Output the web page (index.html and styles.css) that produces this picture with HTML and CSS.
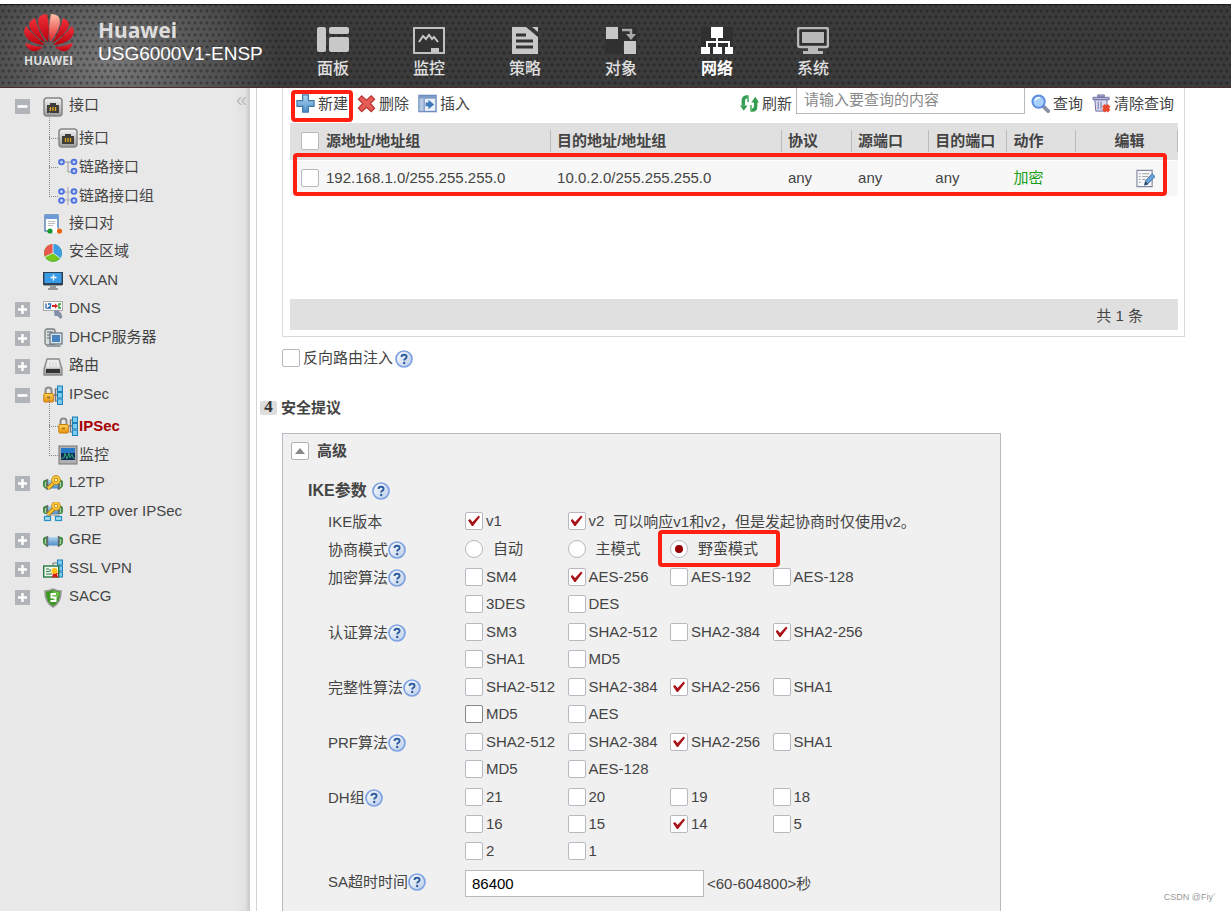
FILE: index.html
```html
<!DOCTYPE html>
<html lang="zh-CN">
<head>
<meta charset="utf-8">
<title>Huawei USG6000V1-ENSP</title>
<link rel="stylesheet" href="styles.css">
</head>
<body>
<svg class="defs" aria-hidden="true">
  <defs>
    <linearGradient id="g-red" x1="0" y1="0" x2="0" y2="1"><stop offset="0" stop-color="#f0303a"/><stop offset="1" stop-color="#b8000c"/></linearGradient>
    <linearGradient id="g-pink" x1="0" y1="0" x2="0" y2="1"><stop offset="0" stop-color="#ffc0a8"/><stop offset="1" stop-color="#e02028"/></linearGradient>
    <linearGradient id="g-metal" x1="0" y1="0" x2="0" y2="1"><stop offset="0" stop-color="#f4f4f4"/><stop offset="1" stop-color="#9a9a9a"/></linearGradient>
    <linearGradient id="g-gold" x1="0" y1="0" x2="0" y2="1"><stop offset="0" stop-color="#ffd45a"/><stop offset="1" stop-color="#e8920c"/></linearGradient>
    <linearGradient id="g-blue" x1="0" y1="0" x2="0" y2="1"><stop offset="0" stop-color="#b4d8f0"/><stop offset="1" stop-color="#4a8cc8"/></linearGradient>
    <linearGradient id="g-help" x1="0" y1="0" x2="1" y2="1"><stop offset="0" stop-color="#ffffff"/><stop offset="1" stop-color="#b8cbe8"/></linearGradient>
  </defs>
  <symbol id="i-port" viewBox="0 0 20 20"><rect x="1" y="1" width="18" height="18" rx="3" fill="url(#g-metal)" stroke="#858585" stroke-width="1.5"/><path d="M4 16V8h3V6h6v2h3v8z" fill="#403c38"/><path d="M7.500 10v4M10 10v4M12.500 10v4" stroke="#e0a820" stroke-width="1.300"/></symbol>
  <symbol id="i-link" viewBox="0 0 20 20"><path d="M4 5h12M10 5v10h6" fill="none" stroke="#999"/><g fill="#c4d2fa" stroke="#4c70dc" stroke-width="1.800"><circle cx="3.500" cy="5" r="2.400"/><circle cx="16" cy="5" r="2.400"/><circle cx="16" cy="14" r="2.400"/></g></symbol>
  <symbol id="i-linkgroup" viewBox="0 0 20 20"><path d="M4 6h12M4 14h12M10 1v18" fill="none" stroke="#aaa"/><g fill="#c4d2fa" stroke="#4c70dc" stroke-width="1.800"><circle cx="3.500" cy="5.500" r="2.400"/><circle cx="16" cy="5.500" r="2.400"/><circle cx="3.500" cy="14.500" r="2.400"/><circle cx="16" cy="14.500" r="2.400"/></g></symbol>
  <symbol id="i-pair" viewBox="0 0 20 20"><rect x="2" y="1" width="13" height="16" fill="#fff" stroke="#4878b0" stroke-width="1.300"/><path d="M2 1h13v4H2z" fill="#6c9cd8"/><path d="M5 7.500h7M5 9.500h7M5 11.500h5" stroke="#bbb"/><path d="M6 16.500h10" stroke="#fff" stroke-width="4"/><circle cx="7" cy="17" r="2.600" fill="#149a30"/><circle cx="16.500" cy="17" r="2.600" fill="#e8640c"/></symbol>
  <symbol id="i-zone" viewBox="0 0 20 20"><circle cx="10" cy="10" r="9" fill="#55b828"/><path d="M10 10V1a9 9 0 0 1 7 14.500z" fill="#3c9ce4"/><path d="M10 10V1A9 9 0 0 0 2 14z" fill="#e8584c"/><path d="M2 13l8-3 6 5a9 9 0 0 1-14-2z" fill="#78c81c"/><path d="M10 1v9l7 5M10 10l-8 4" stroke="#f0f4f8" fill="none" stroke-width=".8"/></symbol>
  <symbol id="i-vxlan" viewBox="0 0 20 20"><rect x="0" y="1" width="20" height="13" fill="#2c4058"/><rect x="1.500" y="2" width="17" height="10" fill="#389ce8"/><path d="M10.500 3.500v6M7.500 6.500h6" stroke="#fff" stroke-width="1.400"/><path d="M1 14h18v1H1zM7 15h6v2H7zM5 17h10v2H5z" fill="#999"/></symbol>
  <symbol id="i-dns" viewBox="0 0 20 20"><rect x=".5" y="1.500" width="19" height="9" fill="#f8f8f8" stroke="#aaa"/><path d="M3 3.500v5M5 4h2.500v2L5 8h3" fill="none" stroke="#2864b8" stroke-width="1.300"/><path d="M9 6h4" stroke="#d82020" stroke-width="2"/><path d="M12 3.500l3 2.500-3 2.500z" fill="#d82020"/><path d="M18 4h-2v4h2" fill="none" stroke="#28a028" stroke-width="1.400"/><path d="M11 11l4-1 3 3 1.500 4-2 2-3-3-3 0z" fill="#8490a8"/></symbol>
  <symbol id="i-dhcp" viewBox="0 0 20 20"><rect x="2" y="1" width="10" height="16" rx="2" fill="#d8dcdc" stroke="#7a8080" stroke-width="1.300"/><path d="M4 4h6M4 7h3M4 10h3" stroke="#667"/><rect x="7" y="5" width="12" height="11" fill="#dce4ec" stroke="#6c7884" stroke-width="1.300"/><rect x="9" y="7" width="8" height="7" fill="#4884c0"/><path d="M3 17h14l1 2H4z" fill="#9aa0a0"/></symbol>
  <symbol id="i-route" viewBox="0 0 20 20"><path d="M4 2h12l3 10v6H1v-6z" fill="url(#g-metal)" stroke="#888" stroke-width="1.300"/><path d="M5 3.500h10l1.500 7h-13z" fill="#eee"/><path d="M7 5v5M10 5v5M13 5v5" stroke="#ccc"/><path d="M3 12h14v4H3z" fill="#333"/></symbol>
  <symbol id="i-ipsec" viewBox="0 0 20 20"><path d="M2.500 9V5.500a3 3 0 0 1 6 0V9" fill="none" stroke="#8a8a90" stroke-width="2"/><path d="M11 10h5M12.500 3.500v13" stroke="#777" stroke-width="1.500"/><rect x=".8" y="8.500" width="9.500" height="8.500" rx="1" fill="url(#g-gold)" stroke="#c87c10"/><path d="M4 12.500h3" stroke="#a86808" stroke-width="1.500"/><path d="M12 4h3M12 16h3" stroke="#777"/><g fill="#7cccf0" stroke="#1c80b8"><rect x="14.500" y="1" width="5" height="5.500"/><rect x="14.500" y="7.500" width="5" height="5.500"/><rect x="14.500" y="14" width="5" height="5.500"/></g></symbol>
  <symbol id="i-monitor" viewBox="0 0 20 20"><rect x="1" y="1" width="18" height="18" fill="#b0b0b0" stroke="#777"/><rect x="3" y="3" width="14" height="12" fill="#102c58"/><path d="M3 3h14v5H3z" fill="#2878c8"/><path d="M3 13h3l1-5 2 6 2-6 1 5 2-4 1 4h2" fill="none" stroke="#30a070"/></symbol>
  <symbol id="i-gre" viewBox="0 0 20 20"><path d="M4 5.500Q-1 6-.5 10T4 15.500zM16 5.500q5 .5 4.500 4.500T16 15.500z" fill="#468c46"/><path d="M3 8q-1.500 2 0 5M17 8q1.500 2 0 5" fill="none" stroke="#c8dcc8"/><path d="M5 6h10v8.500H5z" fill="url(#g-blue)"/><path d="M4.500 5v11M15.500 5v11" stroke="#667" stroke-width="1.400"/></symbol>
  <symbol id="i-key" viewBox="0 0 20 20"><path d="M5 14.500l7-7" stroke="#b87808" stroke-width="4"/><path d="M5 14.500l7-7" stroke="#f8c838" stroke-width="2.400"/><circle cx="13" cy="6" r="3" fill="#fff4c0" stroke="#b87808" stroke-width="3.400"/><circle cx="13" cy="6" r="3" fill="none" stroke="#f8c838" stroke-width="2"/></symbol>
  <symbol id="i-l2tp" viewBox="0 0 20 20"><use href="#i-gre"/><use href="#i-key"/></symbol>
  <symbol id="i-l2tpip" viewBox="0 0 20 20"><use href="#i-gre" y="-2"/><path d="M2 12h16v8H2z" fill="#e8e8e8"/><path d="M4 15v-2h12v2" fill="none" stroke="#888"/><g fill="#9cdcf4" stroke="#2890c4" stroke-width="1.200"><rect x="1.500" y="14.500" width="6" height="4"/><rect x="12.500" y="14.500" width="6" height="4"/></g><use href="#i-key" y="-2"/></symbol>
  <symbol id="i-ssl" viewBox="0 0 20 20"><path d="M10 7V4h4" stroke="#777" fill="none"/><g fill="#7cccf0" stroke="#1c80b8"><rect x="14.500" y="1" width="5" height="5"/><rect x="14.500" y="7" width="5" height="5"/><rect x="14.500" y="13" width="5" height="5"/></g><rect x=".7" y="7" width="15" height="11" fill="#eef8ee" stroke="#287840" stroke-width="1.400"/><path d="M3 10h3M3 12.500h3M3 15h6M7 10v3" stroke="#287840"/><path d="M10 14l-1 5 3-1 3 1-1-4 3-1z" fill="#d81818"/><circle cx="11.500" cy="12" r="3" fill="#ffc010"/></symbol>
  <symbol id="i-sacg" viewBox="0 0 20 20"><path d="M10 1q4 2 8 2 0 12-8 16Q2 15 2 3q4 0 8-2z" fill="#3c9820" stroke="#999" stroke-width="1.600"/><path d="M10 2.500q3 1.500 6.500 1.700-.5 7-6.500 8z" fill="#6cc048"/><path d="M13 6H8.500v3.500h4V13H7.500" fill="none" stroke="#fff" stroke-width="2"/></symbol>
  <symbol id="i-add" viewBox="0 0 20 20"><path d="M7 1h6v6h6v6h-6v6H7v-6H1V7h6z" fill="url(#g-blue)" stroke="#4078ac" stroke-width="1.300"/></symbol>
  <symbol id="i-del" viewBox="0 0 20 20"><path d="M5 2l5 4.500L15 2l3.500 3.500L14 10l4.500 5L15 18.500 10 14l-5 4.500L1.500 15 6 10 1.500 5.500z" fill="#e85c58" stroke="#b83430" stroke-width="1.300"/></symbol>
  <symbol id="i-insert" viewBox="0 0 20 20"><rect x="1" y="1.500" width="18" height="17" fill="#eaf0f8" stroke="#6c8cbc" stroke-width="1.500"/><path d="M1 2h18v3H1z" fill="#7c9cc8"/><path d="M2 5h4v13H2z" fill="#b4c8e4"/><path d="M6.500 5v13" stroke="#6c8cbc" stroke-width="1.200"/><path d="M8 9h3V6l6 5-6 5v-3H8z" fill="#3c78b8"/></symbol>
  <symbol id="i-refresh" viewBox="0 0 20 20"><g fill="none" stroke="#349c50" stroke-width="3.600"><path d="M9 3H7Q3.500 3 3.500 7v5"/><path d="M11 17h2q3.500 0 3.500-4V8"/></g><path d="M0 11h8l-4 5.500z" fill="#349c50" transform="translate(0 1)"/><path d="M12 9h8l-4-6z" fill="#349c50"/><path d="M8.500 2.500v6M11.500 17.500v-6" stroke="#64bc78" stroke-width="2"/></symbol>
  <symbol id="i-search" viewBox="0 0 20 20"><path d="M13 13l5 5" stroke="#8890a8" stroke-width="4" stroke-linecap="round"/><circle cx="8" cy="8" r="6.500" fill="#a8d0fc" stroke="#5c8ce0" stroke-width="2"/><path d="M4.500 7a4 4 0 0 1 5-3" stroke="#fff" stroke-width="1.500" fill="none"/></symbol>
  <symbol id="i-trash" viewBox="0 0 20 20"><path d="M3 6h13l-1 12H4z" fill="#dcdcf0" stroke="#6c6ca0"/><path d="M1 3.500h17v2.500H1zM6 1h7v2H6z" fill="#b8b8dc" stroke="#6c6ca0"/><path d="M6.500 8v8M9.500 8v8" stroke="#6c6ca0"/><path d="M12 12l6 6M18 12l-6 6" stroke="#e8482c" stroke-width="4"/></symbol>
  <symbol id="i-edit" viewBox="0 0 20 20"><path d="M1 1.500h16v17H1z" fill="#f8f8fa" stroke="#8088a0" stroke-width="1.200"/><path d="M3 5h2M6.500 5H14M3 8h2M6.500 8H13M3 11h2M6.500 11H10M3 14h2" stroke="#999ca8"/><path d="M9 17l1-4.500L17 5l3 3-7.500 7.500z" fill="#68a4dc" stroke="#3c6ca4"/><path d="M9 17l1-4 3 3z" fill="#345"/></symbol>
  <symbol id="i-help" viewBox="0 0 18 18"><circle cx="9" cy="9" r="8" fill="url(#g-help)" stroke="#7ea2e2" stroke-width="1.700"/><path d="M6.500 7Q6.500 4.800 9 4.800q2.600 0 2.600 2 0 1.300-1.400 2Q9.200 9.400 9.200 10.600" fill="none" stroke="#2c5c9c" stroke-width="1.900"/><circle cx="9.200" cy="13" r="1.200" fill="#2c5c9c"/></symbol>
  <symbol id="i-plus" viewBox="0 0 15 15"><path d="M7.500 3v9M3 7.500h9" stroke="#fff" stroke-width="2.400"/></symbol>
  <symbol id="i-minus" viewBox="0 0 15 15"><path d="M2.500 7.500h10" stroke="#fff" stroke-width="2.600"/></symbol>
</svg>

<header class="topbar">
  <div class="brand">
    <div class="logo">
      <svg viewBox="0 0 50 40" aria-hidden="true"><g fill="url(#g-red)">
        <path d="M24 29C18 22 12 12 15 4Q18 1 23 1 26 14 24 29z"/>
        <path d="M22 30C13 25 5 17 5 11Q6 7 11 5 14 18 22 30z"/>
        <path d="M21 32C12 32 1 27 0 19Q0 16 2 13 9 22 21 32z"/>
        <path d="M19 34Q14 39 8 38 3 36 1 30 9 33 19 34z"/>
        <path d="M28 30C37 25 45 17 45 11Q44 7 39 5 36 18 28 30z"/>
        <path d="M29 32C38 32 49 27 50 19Q50 16 48 13 41 22 29 32z"/>
        <path d="M31 34Q36 39 42 38 47 36 49 30 41 33 31 34z"/></g>
        <path d="M26 29C32 22 38 12 35 4Q32 1 27 1 24 14 26 29z" fill="url(#g-pink)"/>
      </svg>
      <span>HUAWEI</span>
    </div>
    <div class="product"><strong>Huawei</strong><span>USG6000V1-ENSP</span></div>
  </div>
  <nav class="mainnav">
    <a href="#"><svg viewBox="0 0 32 28"><g fill="#c8c8c8"><rect x="0" y="0" width="9" height="25" rx="2"/><rect x="12" y="0" width="20" height="7" rx="2"/><rect x="12" y="10" width="20" height="15" rx="2"/></g></svg>面板</a>
    <a href="#"><svg viewBox="0 0 32 28"><rect x="1" y="1" width="30" height="25" fill="#333" stroke="#c0c0c0" stroke-width="2"/><path d="M6 15l4-6 3 3 3-4 3 4 2-2 4 5" fill="none" stroke="#c8c8c8" stroke-width="2"/><path d="M18 21h8v4h-8z" fill="#c8c8c8"/></svg>监控</a>
    <a href="#"><svg viewBox="0 0 32 28"><path d="M3 0h14l12 10v17H3z" fill="#c8c8c8"/><path d="M23 0h6v5z" fill="#c8c8c8"/><path d="M7 8h10M7 14h17M7 20h17" stroke="#333" stroke-width="3"/></svg>策略</a>
    <a href="#"><svg viewBox="0 0 32 28"><path d="M0 13h18v14H0zM14 0h18v14H14z" fill="#303030"/><path d="M1 0h12v12H1zM19 14h12v13H19z" fill="#c8c8c8"/><path d="M17 3h9v5" fill="none" stroke="#a8a8a8" stroke-width="2.500"/><path d="M21 7h10l-5 6z" fill="#a8a8a8"/></svg>对象</a>
    <a href="#" class="active"><svg viewBox="0 0 32 28"><path d="M0 0h32v27H0z" fill="#303030"/><path d="M10 0h12v11H10zM0 20h9v7H0zM12 20h9v7h-9zM24 20h8v7h-8z" fill="#fff"/><path d="M16 10v11M6 21v-6h22v6" fill="none" stroke="#fff" stroke-width="2"/></svg>网络</a>
    <a href="#"><svg viewBox="0 0 32 28"><rect x="1" y="1" width="30" height="19" rx="2" fill="#303030" stroke="#b8b8b8" stroke-width="2.500"/><path d="M5 5h22v11H5zM11 20h10v4H11zM6 24h20v3H6z" fill="#b8b8b8"/></svg>系统</a>
  </nav>
</header>

<div class="shell">
  <aside class="sidebar">
    <button class="collapse" aria-label="收起">«</button>
    <ul class="tree">
      <li><div class="row"><button class="tog" aria-label="收起接口"><svg><use href="#i-minus"/></svg></button><a href="#"><svg><use href="#i-port"/></svg><span>接口</span></a></div>
        <ul>
          <li><a href="#"><svg><use href="#i-port"/></svg>接口</a></li>
          <li><a href="#"><svg><use href="#i-link"/></svg>链路接口</a></li>
          <li><a href="#"><svg><use href="#i-linkgroup"/></svg>链路接口组</a></li>
        </ul></li>
      <li><div class="row"><a href="#"><svg><use href="#i-pair"/></svg><span>接口对</span></a></div></li>
      <li><div class="row"><a href="#"><svg><use href="#i-zone"/></svg><span>安全区域</span></a></div></li>
      <li><div class="row"><a href="#"><svg><use href="#i-vxlan"/></svg><span>VXLAN</span></a></div></li>
      <li><div class="row"><button class="tog" aria-label="展开DNS"><svg><use href="#i-plus"/></svg></button><a href="#"><svg><use href="#i-dns"/></svg><span>DNS</span></a></div></li>
      <li><div class="row"><button class="tog" aria-label="展开DHCP服务器"><svg><use href="#i-plus"/></svg></button><a href="#"><svg><use href="#i-dhcp"/></svg><span>DHCP服务器</span></a></div></li>
      <li><div class="row"><button class="tog" aria-label="展开路由"><svg><use href="#i-plus"/></svg></button><a href="#"><svg><use href="#i-route"/></svg><span>路由</span></a></div></li>
      <li><div class="row"><button class="tog" aria-label="收起IPSec"><svg><use href="#i-minus"/></svg></button><a href="#"><svg><use href="#i-ipsec"/></svg><span>IPSec</span></a></div>
        <ul>
          <li><a href="#" class="current"><svg><use href="#i-ipsec"/></svg>IPSec</a></li>
          <li><a href="#"><svg><use href="#i-monitor"/></svg>监控</a></li>
        </ul></li>
      <li><div class="row"><button class="tog" aria-label="展开L2TP"><svg><use href="#i-plus"/></svg></button><a href="#"><svg><use href="#i-l2tp"/></svg><span>L2TP</span></a></div></li>
      <li><div class="row"><a href="#"><svg><use href="#i-l2tpip"/></svg><span>L2TP over IPSec</span></a></div></li>
      <li><div class="row"><button class="tog" aria-label="展开GRE"><svg><use href="#i-plus"/></svg></button><a href="#"><svg><use href="#i-gre"/></svg><span>GRE</span></a></div></li>
      <li><div class="row"><button class="tog" aria-label="展开SSL VPN"><svg><use href="#i-plus"/></svg></button><a href="#"><svg><use href="#i-ssl"/></svg><span>SSL VPN</span></a></div></li>
      <li><div class="row"><button class="tog" aria-label="展开SACG"><svg><use href="#i-plus"/></svg></button><a href="#"><svg><use href="#i-sacg"/></svg><span>SACG</span></a></div></li>
    </ul>
  </aside>

  <main class="content">
    <section class="flows">
      <div class="toolbar">
        <button class="tool marked"><svg><use href="#i-add"/></svg>新建</button>
        <button class="tool"><svg><use href="#i-del"/></svg>删除</button>
        <button class="tool"><svg><use href="#i-insert"/></svg>插入</button>
        <button class="tool push"><svg><use href="#i-refresh"/></svg>刷新</button>
        <input class="query" type="text" placeholder="请输入要查询的内容" aria-label="查询内容">
        <button class="tool"><svg><use href="#i-search"/></svg>查询</button>
        <button class="tool"><svg><use href="#i-trash"/></svg>清除查询</button>
      </div>
      <div class="tablewrap">
        <table>
          <colgroup><col class="c-src"><col class="c-dst"><col class="c-proto"><col class="c-sport"><col class="c-dport"><col class="c-act"><col class="c-edit"></colgroup>
          <thead><tr>
            <th><label><input type="checkbox"><span>源地址/地址组</span></label></th><th><div>目的地址/地址组</div></th><th><div>协议</div></th><th><div>源端口</div></th><th><div>目的端口</div></th><th><div>动作</div></th><th class="center"><div>编辑</div></th>
          </tr></thead>
          <tbody><tr>
            <td><label><input type="checkbox"><span>192.168.1.0/255.255.255.0</span></label></td><td>10.0.2.0/255.255.255.0</td><td>any</td><td>any</td><td>any</td><td class="ok">加密</td><td class="edit"><button aria-label="编辑"><svg><use href="#i-edit"/></svg></button></td>
          </tr></tbody>
        </table>
        <div class="rowmark"></div>
      </div>
      <div class="pager">共 1 条</div>
    </section>

    <div class="inject"><label><input type="checkbox">反向路由注入</label><svg class="help"><use href="#i-help"/></svg></div>

    <h2 class="step"><span class="num">4</span>安全提议</h2>

    <section class="advanced">
      <div class="advhead"><button class="fold" aria-label="收起高级"></button><h3>高级</h3></div>
      <h4>IKE参数<svg class="help"><use href="#i-help"/></svg></h4>

      <div class="group"><div class="name">IKE版本</div><div class="opts">
        <label><input type="checkbox" checked>v1</label>
        <div class="with-hint"><label><input type="checkbox" checked>v2</label><span class="hint">可以响应v1和v2，但是发起协商时仅使用v2。</span></div>
      </div></div>
      <div class="group"><div class="name">协商模式<svg class="help"><use href="#i-help"/></svg></div><div class="opts modes">
        <label><input type="radio" name="mode">自动</label><label><input type="radio" name="mode">主模式</label><label class="marked"><input type="radio" name="mode" checked>野蛮模式</label>
      </div></div>
      <div class="group"><div class="name">加密算法<svg class="help"><use href="#i-help"/></svg></div><div class="opts">
        <label><input type="checkbox">SM4</label><label><input type="checkbox" checked>AES-256</label><label><input type="checkbox">AES-192</label><label><input type="checkbox">AES-128</label>
        <label><input type="checkbox">3DES</label><label><input type="checkbox">DES</label>
      </div></div>
      <div class="group"><div class="name">认证算法<svg class="help"><use href="#i-help"/></svg></div><div class="opts">
        <label><input type="checkbox">SM3</label><label><input type="checkbox">SHA2-512</label><label><input type="checkbox">SHA2-384</label><label><input type="checkbox" checked>SHA2-256</label>
        <label><input type="checkbox">SHA1</label><label><input type="checkbox">MD5</label>
      </div></div>
      <div class="group"><div class="name">完整性算法<svg class="help"><use href="#i-help"/></svg></div><div class="opts">
        <label><input type="checkbox">SHA2-512</label><label><input type="checkbox">SHA2-384</label><label><input type="checkbox" checked>SHA2-256</label><label><input type="checkbox">SHA1</label>
        <label><input type="checkbox" class="hot">MD5</label><label><input type="checkbox">AES</label>
      </div></div>
      <div class="group"><div class="name">PRF算法<svg class="help"><use href="#i-help"/></svg></div><div class="opts">
        <label><input type="checkbox">SHA2-512</label><label><input type="checkbox">SHA2-384</label><label><input type="checkbox" checked>SHA2-256</label><label><input type="checkbox">SHA1</label>
        <label><input type="checkbox">MD5</label><label><input type="checkbox">AES-128</label>
      </div></div>
      <div class="group"><div class="name">DH组<svg class="help"><use href="#i-help"/></svg></div><div class="opts">
        <label><input type="checkbox">21</label><label><input type="checkbox">20</label><label><input type="checkbox">19</label><label><input type="checkbox">18</label>
        <label><input type="checkbox">16</label><label><input type="checkbox">15</label><label><input type="checkbox" checked>14</label><label><input type="checkbox">5</label>
        <label><input type="checkbox">2</label><label><input type="checkbox">1</label>
      </div></div>
      <div class="group timeout"><label class="name" for="sa">SA超时时间<svg class="help"><use href="#i-help"/></svg></label><input id="sa" type="text" value="86400"><span class="range">&lt;60-604800&gt;秒</span></div>
    </section>
  </main>
</div>
<div class="credit">CSDN @Fiy`</div>
</body>
</html>
```
FILE: styles.css
```css
* { box-sizing: border-box; }
body {
  margin: 0;
  height: 100vh;
  overflow: hidden;
  display: flex;
  flex-direction: column;
  background: #fff;
  color: #444;
  font: 15px/20px "Liberation Sans", "Noto Sans CJK SC", sans-serif;
}
button, input { font: inherit; color: inherit; margin: 0; }
button { padding: 0; border: 0; background: none; }
a { color: inherit; text-decoration: none; }
ul { list-style: none; margin: 0; padding: 0; }
h2, h3, h4 { margin: 0; font-size: 15px; }
svg { display: block; flex: none; }
.defs { position: absolute; width: 0; height: 0; }
.help { width: 18px; height: 18px; }

/* top bar */
.topbar {
  flex: none;
  display: flex;
  height: 84px;
  margin-top: 4px;
  border-top: 1px solid #1c1c1c;
  border-bottom: 1px solid #4a2c2c;
  background:
    radial-gradient(circle, rgba(20, 20, 20, .4) 1px, transparent 2px) 0 0 / 6px 12px,
    radial-gradient(circle, rgba(20, 20, 20, .4) 1px, transparent 2px) 3px 6px / 6px 12px,
    radial-gradient(ellipse 170px 130px at 110px 56px, #787878, #3b3b3c);
}
.brand { flex: none; width: 285px; display: flex; padding-left: 22px; }
.logo { width: 53px; padding-top: 8px; text-align: center; }
.logo svg { width: 50px; height: 40px; margin: 0 auto; }
.logo span { display: block; margin-top: 1px; font: bold 12px/14px "Open Sans", sans-serif; color: #ddd; }
.product { margin-left: 23px; padding-top: 13px; }
.product strong { display: block; font: bold 21px/24px "Noto Sans", sans-serif; color: #ddd; }
.product span { display: block; margin-top: 1px; font-size: 19px; line-height: 22px; color: #fff; }
.mainnav { display: flex; }
.mainnav a {
  width: 96px;
  padding-top: 22px;
  display: flex;
  flex-direction: column;
  align-items: center;
  gap: 4px;
  font-size: 16px;
  font-weight: 500;
  line-height: 20px;
  color: #e0e0e0;
}
.mainnav svg { width: 32px; height: 28px; }
.mainnav .active { font-weight: bold; color: #fff; }

.shell { flex: 1; min-height: 0; display: flex; }

/* sidebar */
.sidebar {
  position: relative;
  flex: none;
  width: 250px;
  padding-top: 4px;
  background: linear-gradient(to right, #e8e8e8 234px, #e2e2e2 245px, #c8c8c8);
}
.collapse { position: absolute; top: 1px; right: 3px; font-size: 20px; line-height: 20px; color: #bbb; }
.row { display: flex; align-items: center; height: 28px; padding-left: 43px; }
.tree > li:nth-child(odd) > .row { height: 29px; }
.tog { width: 15px; height: 15px; margin: 0 13px 0 -28px; background: #b0b4b8; }
.tog svg { width: 15px; height: 15px; }
.tree a { display: flex; align-items: center; }
.tree a svg { width: 20px; height: 20px; }
.row span { margin-left: 6px; padding-bottom: 3px; }
.tree ul { padding: 2px 0 0 49px; }
.tree ul li { position: relative; padding-left: 9px; height: 29px; }
.tree ul li a { height: 29px; gap: 1px; }
.tree ul li::before {
  content: "";
  position: absolute;
  left: 0;
  top: -15px;
  width: 8px;
  height: 30px;
  border-left: 1px dotted #888;
  border-bottom: 1px dotted #888;
}
.tree .current { font-weight: bold; color: #a80000; }

/* main area */
.content {
  flex: 1;
  min-width: 0;
  display: flex;
  flex-direction: column;
  margin-left: 6px;
  border-left: 1px solid #d4d4d4;
  padding: 0 46px 0 25px;
}
.flows { flex: none; border: 1px solid #d8d8d8; border-top: 0; padding: 0 6px 6px 7px; }
.toolbar { display: flex; align-items: center; height: 35px; padding: 0 4px 4px 6px; gap: 9px; }
.tool { position: relative; display: flex; align-items: center; gap: 3px; white-space: nowrap; }
.tool svg { width: 19px; height: 19px; }
.push { margin-left: auto; }
.query {
  align-self: flex-start;
  width: 229px;
  height: 26px;
  margin: 0 -3px 0 -5px;
  padding: 0 7px 2px;
  border: 1px solid #b8b8be;
  border-top: 0;
  background: #fff;
}
.query::placeholder { color: #8a8a8a; }
.tool.marked::after, .rowmark, label.marked::after {
  content: "";
  position: absolute;
  border: 4px solid #ff2012;
  border-radius: 4px;
  pointer-events: none;
}
.tool.marked::after { inset: -4px -5px -8px -5px; }
.tablewrap { position: relative; }
.rowmark { inset: 30px 11px 0 3px; }
table { width: 100%; border-collapse: collapse; table-layout: fixed; }
.c-src { width: 29.400%; }
.c-dst { width: 26%; }
.c-proto { width: 7.900%; }
.c-sport { width: 8.700%; }
.c-dport { width: 8.800%; }
.c-act { width: 7.700%; }
.c-edit { width: 11.500%; }
th { height: 37px; padding: 0; background: #e0e0e0; text-align: left; white-space: nowrap; }
th label, th div { display: flex; align-items: center; height: 22px; border-right: 1px solid #bbb; }
th div { padding-left: 6px; }
th.center div { justify-content: center; }
td { height: 36px; padding: 0 0 0 6px; border-top: 1px solid #fff; background: #f7f7f7; white-space: nowrap; }
td label { display: flex; align-items: center; }
th label { padding-left: 11px; gap: 7px; }
td:first-child { padding-left: 11px; }
td label { gap: 7px; }
td.ok { color: #16a016; }
td.edit { padding-right: 23px; }
td.edit button { display: block; margin-left: auto; }
td.edit svg { width: 19px; height: 19px; }
.tablewrap input { background: #f9f9f9; border-color: #c4c4c8; }
.pager { margin-top: 103px; height: 31px; padding: 2px 35px 0 0; background: #e0e0e0; text-align: right; line-height: 30px; }

.inject { display: flex; align-items: center; margin-top: 11px; height: 22px; }
.inject label { display: flex; align-items: center; gap: 3px; }
.inject .help { margin-left: 2px; align-self: flex-end; }
.step { display: flex; align-items: center; gap: 4px; margin: 30px 0 0 -22px; height: 20px; }
.num {
  width: 17px;
  height: 14px;
  background: #ddd;
  border-radius: 2px;
  font: bold 17px/11px "Liberation Serif", serif;
  text-align: center;
  color: #333;
}

input[type=checkbox], input[type=radio] {
  appearance: none;
  flex: none;
  width: 18px;
  height: 18px;
  border: 1px solid #b8b8c0;
  border-radius: 2px;
  background: #fff;
}
input[type=radio] { border-radius: 50%; }
input[type=checkbox].hot { border-color: #888; }
input[type=checkbox]:checked::before {
  content: "";
  display: block;
  width: 12px;
  height: 12px;
  margin: 2px;
  background: #a81418;
  clip-path: polygon(0 48%, 16% 38%, 38% 62%, 88% 8%, 100% 20%, 42% 96%, 32% 96%);
}
input[type=radio]:checked::before {
  content: "";
  display: block;
  width: 8px;
  height: 8px;
  margin: 4px;
  border-radius: 50%;
  background: #980000;
}

/* advanced panel */
.advanced {
  flex: 1 0 auto;
  width: 80%;
  max-width: 719px;
  margin-top: 15px;
  padding: 7px 0 20px 8px;
  border: 1px solid #b8b8c0;
  background: #f0f0f0;
}
.advhead { display: flex; align-items: center; gap: 8px; height: 20px; }
.fold {
  display: flex;
  align-items: center;
  justify-content: center;
  width: 18px;
  height: 18px;
  border: 1px solid #b0b0b8;
  border-radius: 2px;
  background: #fff;
}
.fold::before { content: ""; border: 5px solid transparent; border-top: 0; border-bottom: 6px solid #888; }
.advanced h4 { display: flex; align-items: center; gap: 5px; height: 20px; margin: 20px 0 6px 17px; font-size: 16px; }
.group { display: flex; margin: 0 0 1px 37px; }
.name { flex: none; display: flex; align-items: center; width: 137px; height: 27px; padding-top: 2px; }
.opts { display: grid; grid-template-columns: repeat(4, minmax(0, 1fr)); grid-auto-rows: 27px; width: 410px; white-space: nowrap; }
.opts label { position: relative; display: flex; align-items: center; gap: 3px; }
.opts.modes label { gap: 10px; }
.with-hint { display: flex; gap: 9px; }
.hint { padding-top: 5px; }
label.marked::after { inset: -5px -7px -5px -12px; }
.timeout { margin-top: 6px; }
.timeout input { width: 239px; height: 27px; padding: 0 6px; border: 1px solid #b8b8c0; background: #fff; color: #000; }
.timeout .name { height: 22px; }
.range { margin-left: 3px; line-height: 27px; }

.credit { position: absolute; right: 15px; bottom: 8px; font-size: 9px; line-height: 12px; color: #999; }
```
